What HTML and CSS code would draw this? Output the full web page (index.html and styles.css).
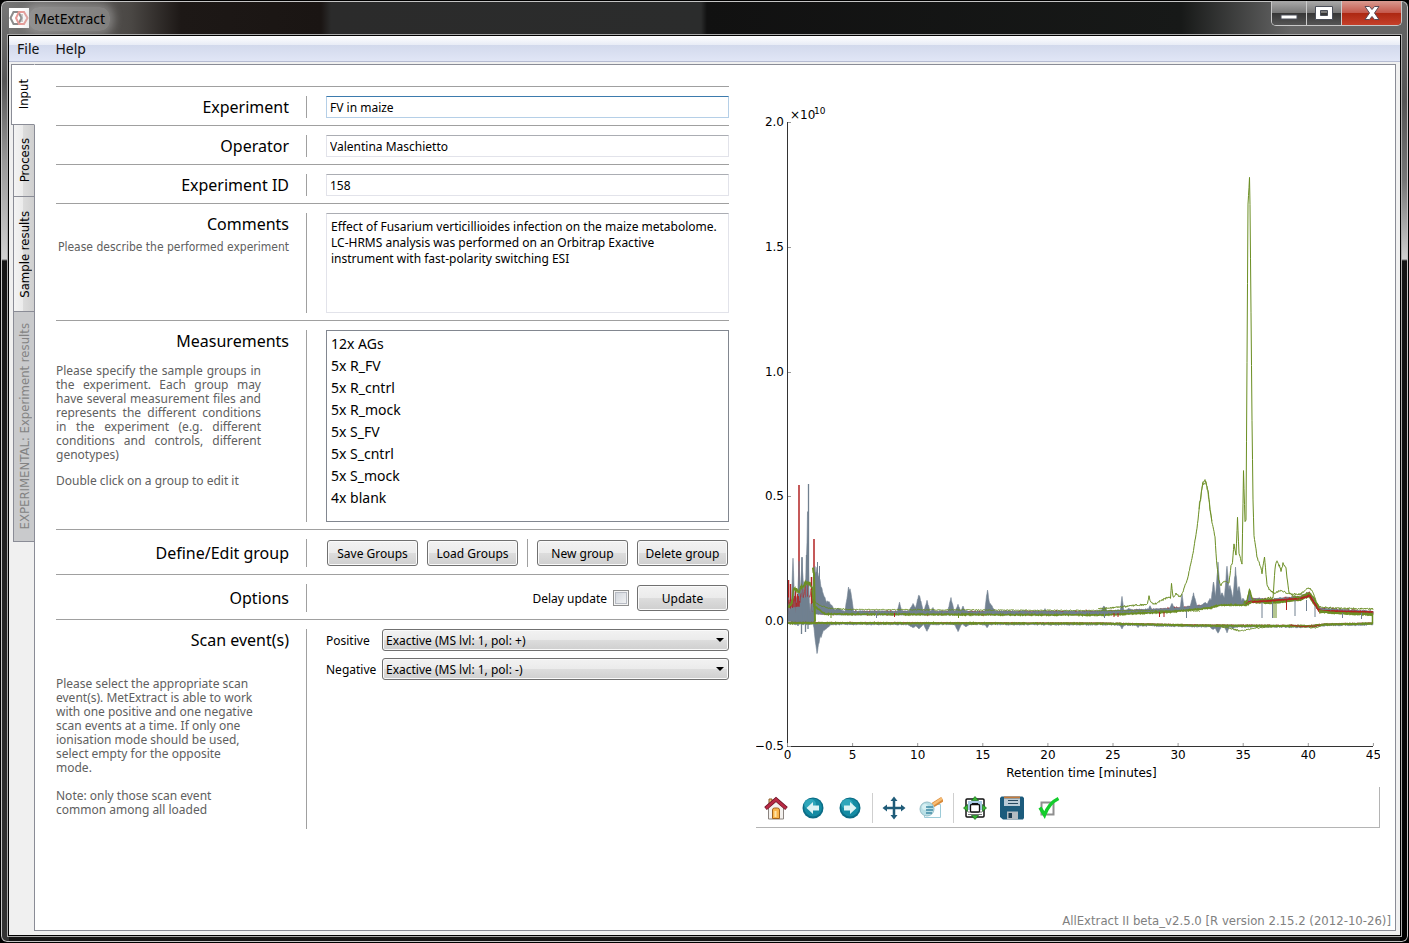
FILE: index.html
```html
<!DOCTYPE html>
<html lang="en">
<head>
  <meta charset="UTF-8" />
  <meta name="viewport" content="width=device-width, initial-scale=1.0"/>
  <title>MetExtract</title>
  <link rel="stylesheet" href="styles.css">
</head>
<body>
  <div class="window">
    <header class="titlebar">
      <svg class="app-icon" viewBox="0 0 20 20" width="20" height="20" aria-hidden="true">
        <rect width="20" height="20" fill="#fff"/>
        <g fill="none" stroke-width="2">
          <path d="M4.500 4h5l3 6-3 6h-5L1.500 10z" stroke="#8c8c8c"/>
          <path d="M10 4h5l3.500 6-3.500 6h-5L7 10z" stroke="#e79a96"/>
          <path d="M13 6v8" stroke="#9a9a9a" stroke-width="1"/>
        </g>
      </svg>
      <span class="app-title">MetExtract</span>
      <div class="window-buttons">
        <button class="win-btn" aria-label="Minimize">
          <svg viewBox="0 0 18 14" width="18" height="14"><rect x="1" y="9" width="16" height="4" fill="#fff" stroke="#4b4f5a"/></svg>
        </button>
        <button class="win-btn" aria-label="Maximize">
          <svg viewBox="0 0 18 14" width="18" height="14"><path fill-rule="evenodd" d="M.5.5h17v13H.5zM5.500 4.500v5h7v-5z" fill="#fff" stroke="#4b4f5a"/></svg>
        </button>
        <button class="win-btn win-close" aria-label="Close">
          <svg viewBox="0 0 18 14" width="18" height="14"><path d="M2 .5h4.500L9 3.500 11.500.5H16L11.500 7l4.500 6.500h-4.500L9 10.500l-2.500 3H2L6.500 7z" fill="#fff" stroke="#5b4a55"/></svg>
        </button>
      </div>
    </header>

    <div class="client">
      <nav class="menubar">
        <a href="#">File</a>
        <a href="#">Help</a>
      </nav>

      <div class="workspace">
        <div class="tabs" role="tablist">
          <button class="tab tab-active" role="tab"><span>Input</span></button>
          <button class="tab tab-process" role="tab"><span>Process</span></button>
          <button class="tab tab-sample" role="tab"><span>Sample results</span></button>
          <button class="tab tab-experiment" role="tab" disabled><span>EXPERIMENTAL: Experiment results</span></button>
        </div>

        <main class="panel">
          <div class="columns">
            <form class="form">
              <div class="row">
                <div class="row-label"><label for="experiment">Experiment</label></div>
                <div class="row-field"><input class="text focused" type="text" id="experiment" value="FV in maize" /></div>
              </div>
              <div class="row">
                <div class="row-label"><label for="operator">Operator</label></div>
                <div class="row-field"><input class="text" type="text" id="operator" value="Valentina Maschietto" /></div>
              </div>
              <div class="row">
                <div class="row-label"><label for="expid">Experiment ID</label></div>
                <div class="row-field"><input class="text" type="text" id="expid" value="158" /></div>
              </div>
              <div class="row">
                <div class="row-label">
                  <label for="comments">Comments</label>
                  <p class="hint hint-right">Please describe the performed experiment</p>
                </div>
                <div class="row-field"><textarea id="comments">Effect of Fusarium verticillioides infection on the maize metabolome.
LC-HRMS analysis was performed on an Orbitrap Exactive
instrument with fast-polarity switching ESI</textarea></div>
              </div>
              <div class="row">
                <div class="row-label">
                  <label for="groups">Measurements</label>
                  <div class="hint hint-block hint-justify">
                    <p>Please specify the sample groups in the experiment. Each group may have several measurement files and represents the different conditions in the experiment (e.g. different conditions and controls, different genotypes)</p>
                    <p>Double click on a group to edit it</p>
                  </div>
                </div>
                <div class="row-field">
                  <select id="groups" class="groups" size="8">
                    <option>12x AGs</option>
                    <option>5x R_FV</option>
                    <option>5x R_cntrl</option>
                    <option>5x R_mock</option>
                    <option>5x S_FV</option>
                    <option>5x S_cntrl</option>
                    <option>5x S_mock</option>
                    <option>4x blank</option>
                  </select>
                </div>
              </div>
              <div class="row row-buttons">
                <div class="row-label"><span>Define/Edit group</span></div>
                <div class="row-field buttons">
                  <button type="button" class="btn">Save Groups</button>
                  <button type="button" class="btn">Load Groups</button>
                  <span class="divider"></span>
                  <button type="button" class="btn">New group</button>
                  <button type="button" class="btn">Delete group</button>
                </div>
              </div>
              <div class="row row-buttons">
                <div class="row-label"><span>Options</span></div>
                <div class="row-field buttons options">
                  <label class="check-label" for="delay">Delay update</label>
                  <input type="checkbox" class="check" id="delay" />
                  <button type="button" class="btn">Update</button>
                </div>
              </div>
              <div class="row row-scan">
                <div class="row-label">
                  <span>Scan event(s)</span>
                  <div class="hint hint-block hint-scan">
                    <p>Please select the appropriate scan event(s). MetExtract is able to work with one positive and one negative scan events at a time. If only one ionisation mode should be used, select empty for the opposite mode.</p>
                    <p>Note: only those scan event common among all loaded</p>
                  </div>
                </div>
                <div class="row-field scans">
                  <label for="positive">Positive</label>
                  <div class="combo"><select id="positive"><option>Exactive (MS lvl: 1, pol: +)</option></select></div>
                  <label for="negative">Negative</label>
                  <div class="combo"><select id="negative"><option>Exactive (MS lvl: 1, pol: -)</option></select></div>
                </div>
              </div>
            </form>

            <section class="plot">
              <svg id="chart" class="chart" viewBox="756 86 624 701" role="img" aria-label="Chromatograms"></svg>
              <div class="toolbar">
                <button class="tool" aria-label="Home">
                  <svg viewBox="0 0 24 24" width="24" height="24">
                    <path d="M5 3h3v7H5z" fill="#f3c27a" stroke="#8a5a2a"/>
                    <path d="M4.500 11 12 5l7.500 6v12h-15z" fill="#f4f1ee" stroke="#8b8480"/>
                    <path d="M8.500 22.500V14q0-2 2-2h3q2 0 2 2v8.500z" fill="#f9b54c" stroke="#a0621c"/>
                    <path d="M10.500 21v-6h2v6z" fill="#fde3a8"/>
                    <path d="M1.500 12.500 12 3.500l10.500 9" fill="none" stroke="#6d1426" stroke-width="4"/>
                    <path d="M2 12.200 12 3.500l10 8.700" fill="none" stroke="#b92a45" stroke-width="2.500"/>
                  </svg>
                </button>
                <button class="tool" aria-label="Back">
                  <svg viewBox="0 0 24 24" width="24" height="24">
                    <circle cx="12" cy="12" r="10.500" fill="#0b6c86"/><circle cx="12" cy="11.500" r="9" fill="#148ba3"/>
                    <ellipse cx="9" cy="8" rx="6" ry="5" fill="#3ab3c4" opacity=".7"/>
                    <path d="M5.500 12 12 6v3.500h6v5h-6V18z" fill="#dcf3f4"/>
                  </svg>
                </button>
                <button class="tool" aria-label="Forward">
                  <svg viewBox="0 0 24 24" width="24" height="24">
                    <circle cx="12" cy="12" r="10.500" fill="#0b6c86"/><circle cx="12" cy="11.500" r="9" fill="#148ba3"/>
                    <ellipse cx="9" cy="8" rx="6" ry="5" fill="#3ab3c4" opacity=".7"/>
                    <path d="M18.500 12 12 6v3.500H6v5h6V18z" fill="#dcf3f4"/>
                  </svg>
                </button>
                <span class="tool-sep"></span>
                <button class="tool" aria-label="Pan">
                  <svg viewBox="0 0 24 24" width="24" height="24">
                    <path d="M12 3v18M3 12h18" stroke="#1f5b78" stroke-width="2.500"/>
                    <path d="M12 .5 15.500 5h-7zM12 23.500 15.500 19h-7zM.5 12 5 8.500v7zM23.500 12 19 8.500v7z" fill="#1f5b78"/>
                  </svg>
                </button>
                <button class="tool" aria-label="Zoom">
                  <svg viewBox="0 0 24 24" width="24" height="24">
                    <path d="M5.500 8.500h16v13h-16z" fill="#fbfeff" stroke="#9ccbd8"/>
                    <path d="M14 9 23.500 3" stroke="#d98a3a" stroke-width="5"/>
                    <path d="M14 8.500 23 2.500" stroke="#f7bd74" stroke-width="2.500"/>
                    <circle cx="8" cy="13" r="7" fill="#b9dfe5" stroke="#94bcc6"/>
                    <circle cx="6" cy="11" r="3" fill="#d8f0f3"/>
                    <path d="M7 11h7M7 14h7M7 17h6" stroke="#3f8ba5" stroke-width="1.500"/>
                  </svg>
                </button>
                <span class="tool-sep"></span>
                <button class="tool" aria-label="Configure subplots">
                  <svg viewBox="0 0 24 24" width="24" height="24">
                    <rect x="3" y="3" width="18" height="18" rx="1" fill="#fff" stroke="#111" stroke-width="1.500"/>
                    <rect x="5" y="5" width="14" height="9" fill="#a9cbe6"/>
                    <path d="M5 16h14M5 18.500h14" stroke="#777"/>
                    <rect x="7.500" y="8.500" width="9" height="7.500" rx="1" fill="#fff" stroke="#111" stroke-width="1.300"/>
                    <path d="M9 8h6" stroke="#111" stroke-width="2"/>
                    <path d="m12 .5 3.500 4h-7zM12 23.500l3.500-4h-7zM.5 12l4-3.500v7zM23.500 12l-4-3.500v7z" fill="#35b52e" stroke="#14631a" stroke-width=".7"/>
                  </svg>
                </button>
                <button class="tool" aria-label="Save">
                  <svg viewBox="0 0 24 24" width="24" height="24">
                    <path d="M1.500.5h21l1.500 1.500v20l-1 1.500H3L0 21V2z" fill="#1c5b7c"/>
                    <path d="M4 .5h16v2H4z" fill="#c47a3c"/>
                    <path d="M4 2.500h16V10H4z" fill="#b9cad6"/>
                    <path d="M8 4.500h10M8 7.500h10" stroke="#24475e" stroke-width="1.200"/>
                    <path d="M7 15.500h11v8H7z" fill="#b4bcc2"/><path d="M8.500 17h3.500v5H8.500z" fill="#1c3c52"/>
                  </svg>
                </button>
                <button class="tool" aria-label="Edit parameters">
                  <svg viewBox="0 0 24 24" width="24" height="24">
                    <path d="M4.500 6.500h12v12h-12z" fill="#fff" stroke="#8f8f8f" stroke-width="2"/>
                    <path d="M3 11.500 7.500 19Q12 7 21.500 2.500" fill="none" stroke="#14cc2c" stroke-width="3.500"/>
                  </svg>
                </button>
              </div>
            </section>
          </div>
          <footer class="version">AllExtract II beta_v2.5.0 [R version 2.15.2 (2012-10-26)]</footer>
        </main>
      </div>
    </div>
  </div>
  <script src="chart.js"></script>
</body>
</html>
```

FILE: styles.css
```css
* { box-sizing: border-box; }

body {
  margin: 0;
  height: 100vh;
  background: #000;
  font-family: "Noto Sans", sans-serif;
  font-size: 12px;
  color: #000;
}

button, input, select, textarea { font: inherit; color: inherit; }
p { margin: 0; }

/* window frame */
.window {
  display: flex;
  flex-direction: column;
  height: 100vh;
  padding: 0 6px 6px;
  border: 1px solid #000;
  border-radius: 7px;
  box-shadow: inset 0 0 0 1px #c4c4c4;
  background:
    linear-gradient(#777 0, #555 80px, #999 160px, #d0d0d0 258px, #151515 260px, #333 100%) left / 8px 100% no-repeat,
    linear-gradient(#666 0, #555 100px, #777 180px, #d0d0d0 258px, #151515 260px, #000 100%) right / 8px 100% no-repeat,
    linear-gradient(to right, #777 0, #4a4744 130px, #1d1816 180px, #1a1513 320px, #2b2b2b 330px, #2b2c2c 700px, #111 706px, #171918 1180px, #666 1290px) top / 100% 35px no-repeat,
    #151515;
}

.titlebar {
  display: flex;
  align-items: flex-start;
  height: 34px;
}

.app-icon { margin: 7px 0 0 2px; }

.app-title {
  margin: 6px 0 0;
  padding: 0 5px;
  font-size: 14px;
  line-height: 24px;
  background: rgba(200, 200, 200, .4);
  border-radius: 10px;
  box-shadow: 0 0 8px 4px rgba(200, 200, 200, .4);
}

.window-buttons {
  display: flex;
  margin-left: auto;
  border: 1px solid #c8c8c8;
  border-top: 0;
  border-radius: 0 0 5px 5px;
  overflow: hidden;
}

.win-btn {
  display: grid;
  place-items: center;
  width: 35px;
  height: 24px;
  padding: 0;
  border: 0;
  border-right: 1px solid #ccc;
  background: linear-gradient(#aaa, #777 50%, #353535 50%, #555);
}

.win-close {
  width: 59px;
  border-right: 0;
  background: linear-gradient(#d99a90, #c4574a 50%, #ac2711 50%, #c5402a);
}

.client {
  flex: 1;
  display: flex;
  flex-direction: column;
  min-height: 0;
  border: 1px solid #000;
  outline: 1px solid #aaa;
  margin: 0 1px;
  background: #f0f0f0;
}

.menubar {
  display: flex;
  gap: 16px;
  height: 26px;
  padding: 0 8px;
  border-bottom: 1px solid #b6bcd2;
  background: linear-gradient(#fff, #e8ecf6 9px, #d2d9ec 9px, #e1e6f6);
}

.menubar a {
  font-size: 14px;
  line-height: 26px;
  color: #111;
  text-decoration: none;
}

.workspace {
  flex: 1;
  display: flex;
  min-height: 0;
  padding: 2px 4px 4px 2px;
}

/* side tabs */
.tabs {
  display: flex;
  flex-direction: column;
  align-items: flex-end;
  width: 24px;
  margin-right: -1px;
  z-index: 1;
}

.tab {
  display: flex;
  align-items: center;
  justify-content: center;
  width: 22px;
  padding: 0;
  border: 1px solid #8a8c96;
  border-top-width: 0;
  background: linear-gradient(to right, #f3f3f3, #ebebeb 45%, #dcdcdc 45%, #cfcfcf);
  font-family: "DejaVu Sans Condensed", "DejaVu Sans", sans-serif;
  font-size: 13px;
}

.tab span {
  writing-mode: vertical-rl;
  transform: rotate(180deg);
  white-space: nowrap;
}

.tab-active {
  width: 24px;
  height: 61px;
  border-top-width: 1px;
  border-right-color: #fff;
  background: #fff;
}

.tab-process { height: 72px; }
.tab-sample { height: 115px; }

.tab-experiment {
  height: 230px;
  background: #c9cacc;
  color: #838383;
}

.panel {
  flex: 1;
  display: flex;
  flex-direction: column;
  min-width: 0;
  padding: 21px 15px 0 21px;
  border: 1px solid #8a8c96;
  background: #fff;
}

.columns {
  display: grid;
  grid-template-columns: 673fr 624fr;
  gap: 27px;
  align-items: start;
}

/* form rows */
.row {
  display: flex;
  padding: 9px 0 7px;
  border-top: 1px solid #a0a0a0;
}

.row-label {
  flex: none;
  width: 251px;
  padding-right: 17px;
  border-right: 1px solid #a0a0a0;
  font-size: 16px;
  line-height: 22px;
  text-align: right;
}

.row-field {
  flex: 1;
  min-width: 0;
  padding-left: 19px;
}

.row-buttons .row-label { line-height: 28px; }
.row-scan .row-label { min-height: 200px; }

.hint {
  font-size: 12px;
  line-height: 14px;
  color: #606060;
}

.hint-right {
  padding-top: 5px;
  font-family: "DejaVu Sans Condensed", "DejaVu Sans", sans-serif;
  white-space: nowrap;
}

.hint-block {
  width: 201px;
  padding-top: 12px;
  text-align: left;
}

.hint-block p + p { margin-top: 12px; }

.hint-justify {
  width: 205px;
  text-align: justify;
}

.hint-scan { padding-top: 26px; }
.hint-scan p + p { margin-top: 14px; }

.text, textarea {
  display: block;
  width: 100%;
  border: 1px solid #e2e3ea;
  border-top-color: #abadb3;
  background: #fff;
  outline: none;
}

.text {
  height: 22px;
  padding: 0 3px;
}

.focused {
  border-color: #b5cfe7;
  border-top-color: #3d7bad;
}

textarea {
  height: 100px;
  padding: 5px 4px;
  line-height: 16px;
  resize: none;
  overflow: hidden;
}

.groups {
  display: block;
  width: 100%;
  height: 192px;
  padding: 3px 0;
  border: 1px solid #828790;
  border-radius: 0;
  background: #fff;
  font-size: 14px;
  overflow: hidden;
  outline: none;
}

.groups option {
  height: 22px;
  min-height: 22px;
  padding: 0 4px;
  line-height: 22px;
}

.buttons {
  display: flex;
  align-items: center;
  justify-content: space-between;
  height: 28px;
  padding: 0 1px 0 20px;
}

.btn {
  width: 91px;
  height: 26px;
  padding: 0;
  border: 1px solid #707070;
  border-radius: 3px;
  box-shadow: inset 0 0 0 1px #fafafa;
  background: linear-gradient(#f2f2f2, #ebebeb 50%, #dddddd 50%, #cfcfcf);
  white-space: nowrap;
}

.divider {
  width: 1px;
  height: 28px;
  background: #a0a0a0;
}

.options { justify-content: flex-end; }

.check {
  appearance: none;
  width: 16px;
  height: 16px;
  margin: 0 8px 0 6px;
  border: 1px solid #8e8f8f;
  box-shadow: inset 0 0 0 1px #f4f4f4, inset 0 0 0 2px #b8bcc4;
  background: linear-gradient(135deg, #cdd2da, #f6f6f6);
}

.scans {
  display: grid;
  grid-template-columns: 49px 1fr;
  gap: 7px;
  align-items: center;
  align-content: start;
}

.combo { position: relative; }

.combo select {
  appearance: none;
  display: block;
  width: 100%;
  height: 22px;
  padding: 0 3px;
  border: 1px solid #707070;
  border-radius: 3px;
  box-shadow: inset 0 0 0 1px #fafafa;
  background: linear-gradient(#f2f2f2, #ebebeb 50%, #dddddd 50%, #cfcfcf);
}

.combo::after {
  content: "";
  position: absolute;
  top: 9px;
  right: 5px;
  border: 4px solid transparent;
  border-top-color: #000;
  border-bottom: 0;
}

/* plot */
.chart {
  display: block;
  width: 100%;
  height: auto;
  font-family: "DejaVu Sans", sans-serif;
  font-size: 12px;
}

.toolbar {
  display: flex;
  align-items: center;
  gap: 13px;
  height: 41px;
  padding: 2px 0 0 8px;
  border: solid #b4b4b4;
  border-width: 0 1px 1px 0;
}

.tool {
  padding: 0;
  border: 0;
  background: none;
}

.tool svg { display: block; }

.tool-sep {
  width: 1px;
  height: 30px;
  margin: 0 -4px 0 -3px;
  background: #cfcfcf;
}

.version {
  margin: auto -11px 1px 0;
  font-family: "DejaVu Sans Condensed", "DejaVu Sans", sans-serif;
  font-size: 13px;
  line-height: 16px;
  text-align: right;
  color: #808080;
}
```

FILE: chart.js
```js
const GREEN = "#6b8e23", GRAY = "#708090", RED = "#b22222";
const NS = "http://www.w3.org/2000/svg";
const chart = document.getElementById("chart");

// fixed seed, so the traces look the same on every load
let seed = 7;
function rand() {
  seed = (seed * 16807) % 2147483647;
  return seed / 2147483647;
}

function add(name, attrs, text) {
  const el = document.createElementNS(NS, name);
  for (const key in attrs) el.setAttribute(key, attrs[key]);
  if (text) el.textContent = text;
  chart.appendChild(el);
  return el;
}

function at(points, x) {
  for (let i = 1; i < points.length; i++) {
    const [x0, y0] = points[i - 1], [x1, y1] = points[i];
    if (x <= x1) return y0 + (y1 - y0) * (x - x0) / (x1 - x0);
  }
  return points[points.length - 1][1];
}

function trace(points, color, noise, width) {
  let d = "";
  const end = points[points.length - 1][0];
  for (let x = points[0][0]; x <= end; x += 0.5) {
    d += `${d ? "L" : "M"}${x} ${(at(points, x) + (rand() - 0.5) * noise).toFixed(1)}`;
  }
  add("path", { d, fill: "none", stroke: color, "stroke-width": width || 1 });
}

// filled band round a baseline, with peaks [x, y, half width]
function band(base, peaks, thick, noise, dir) {
  let d = "";
  const back = [];
  for (let x = base[0][0]; x <= base[base.length - 1][0]; x += 0.5) {
    const y = at(base, x);
    let top = y + dir * (thick + rand() * noise);
    for (const [px, py, w] of peaks) {
      const k = 1 - Math.abs(x - px) / w;
      if (k > 0) {
        const v = y + (py - y) * Math.pow(k, 0.9) * (0.88 + rand() * 0.12);
        top = dir < 0 ? Math.min(top, v) : Math.max(top, v);
      }
    }
    d += `${d ? "L" : "M"}${x} ${top.toFixed(1)}`;
    back.unshift(`L${x} ${y.toFixed(1)}`);
  }
  add("path", { d: d + back.join("") + "z", fill: GRAY, stroke: GRAY, "stroke-width": 0.6 });
}

function spikes(list, color, width) {
  for (const [x, y0, y1] of list) {
    add("path", { d: `M${x} ${y0}V${y1}`, stroke: color, "stroke-width": width || 1 });
  }
}

function axes() {
  add("path", { d: "M787.5 122V746.5H1373", fill: "none", stroke: "#333" });
  [["2.0", 122], ["1.5", 247], ["1.0", 372], ["0.5", 496], ["0.0", 621], ["−0.5", 746]].forEach(([label, y]) => {
    add("path", { d: `M788 ${y + 0.5}h3`, stroke: "#999" });
    add("text", { x: 784, y: y + 4, "text-anchor": "end" }, label);
  });
  for (let m = 0; m <= 45; m += 5) {
    const x = 787.5 + m * 13.02;
    add("path", { d: `M${x} 746v-3`, stroke: "#999" });
    add("text", { x, y: 759, "text-anchor": "middle" }, String(m));
  }
  add("text", { x: 1081.5, y: 777, "text-anchor": "middle" }, "Retention time [minutes]");
  add("text", { x: 790, y: 119 }, "×10");
  add("text", { x: 814, y: 114, "font-size": 9 }, "10");
}

const base = [[813, 614], [840, 615], [1100, 615], [1170, 612], [1210, 608], [1220, 605], [1246, 605], [1252, 602], [1270, 603], [1300, 600], [1309, 596], [1314, 604], [1320, 612], [1373, 615]];
const shift = (points, dy) => points.map(([x, y]) => [x, y + dy]);

// injection noise at the start of the run
spikes([[788.5, 580, 622], [790.5, 584, 620], [795.5, 590, 622], [811.5, 577, 612], [797.5, 596, 622]], RED, 1.5);
spikes([[799, 485, 622], [814, 539, 622]], RED, 1.5);
band([[788, 622], [814, 622]], [[793, 553, 2], [799, 556, 2], [802, 557, 3], [804, 578, 2], [806.5, 555, 2], [807.5, 510, 2], [814, 560, 2]], 6, 20, -1);
trace([[788, 608], [793, 602], [800, 600], [804, 592], [811, 590], [813, 600]], RED, 14, .7);
spikes([[808.5, 484, 620], [802, 557, 620], [806.5, 555, 620]], GRAY, 1.3);
spikes([[798, 615, 626], [801.5, 615, 634], [805.5, 615, 632], [808, 615, 629]], GRAY, 1.3);
trace([[788, 607], [792, 603], [794, 586], [798, 592], [802, 587], [807, 583], [812, 585], [813.5, 592]], GREEN, 5, 1.5);

trace(shift(base, -2), RED, 1, 3);
band(base, [
  [815, 562, 3], [817, 566, 7], [819, 575, 8], [822, 588, 8], [828, 600, 10], [838, 608, 12], [848.5, 587, 4], [850, 586, 4],
  [899.5, 602, 3], [913, 603, 6], [919, 593, 5], [927, 600, 4], [933, 607, 3], [951, 597, 4], [958, 604, 4], [963, 606, 4],
  [987.5, 587, 3], [990, 602, 7], [1045, 608, 3], [1104, 605, 5], [1122, 595, 2], [1129, 608, 8], [1150, 605, 3], [1172, 603, 4],
  [1182, 592, 2], [1193.5, 592, 4], [1205, 602, 7], [1210, 598, 5], [1213.5, 580, 3], [1218, 561, 3], [1222, 592, 5],
  [1227, 563, 3], [1230, 584, 4], [1235.5, 566, 3], [1239, 584, 3], [1243, 598, 4], [1249.5, 589, 3]
], 3, 1.5, -1);
spikes([[817.5, 562, 575], [819.5, 566, 580]], GRAY);
trace(shift(base, -1).filter(p => p[0] > 1240), RED, 1, 2);
trace([[812, 590], [814, 606], [825, 614], [1100, 615]].concat(base.slice(3)), GREEN, 1.2, 1.5);
trace([[1244, 603], [1247, 601], [1249.5, 590], [1253, 601], [1265, 600], [1285, 601], [1301, 597], [1309, 593], [1314, 598], [1319, 608]], GREEN, 1.5, 1.5);
trace([[1252, 602], [1300, 598.5], [1310, 596], [1319, 611], [1373, 612]], RED, .6, 1.5);
trace([[1319, 611], [1335, 613], [1373, 614]], GREEN, .6, 2);
spikes([[1262, 602, 618], [1272.5, 602, 618], [1295, 600, 616], [1306.5, 600, 611], [1315, 606, 617], [1342.5, 613, 618], [1361.5, 613, 619], [1186.5, 610, 618], [1104.5, 613, 618], [876.5, 613, 618]], GRAY);
spikes([[1114, 613, 617], [1118, 613, 617], [1159.5, 612, 617], [1164, 612, 617], [1286.5, 600, 610], [894.5, 613, 617]], RED);
spikes([[1274, 602, 618], [1276, 602, 618], [958.5, 613, 618], [831, 613, 618]], GREEN);

// negative mode
const neg = [[788, 622.5], [1100, 623], [1200, 625], [1310, 625.5], [1325, 624], [1373, 623]];
band(neg, [[815.5, 643, 2], [817, 657, 3], [818, 648, 5], [821, 638, 5], [824, 631, 9], [913, 628, 8], [919, 629, 6], [927, 632, 4], [958, 632, 4], [966, 627, 5],
  [987, 628, 3], [1122, 629, 3], [1138, 628, 2], [1213, 630, 5], [1218, 634, 4], [1227, 633, 3], [1233, 629, 5]], 1, 1.5, 1);
trace(neg, RED, .8, 1);
trace(shift(neg, .5), GREEN, .8, 1.8);
trace([[1215, 626], [1230, 628], [1240, 631], [1250, 629], [1265, 627], [1290, 626], [1308, 627], [1316, 628], [1325, 624]], GREEN, 1.5);
trace([[1290, 625], [1302, 626.5], [1317, 626], [1320, 624.5]], RED, 1);
trace([[813, 568], [814, 574], [815, 622]], GREEN, 3, 2);
add("path", { d: "M1372.5 614V623", stroke: GREEN, "stroke-width": 1.5 });

trace([[813, 600], [819, 605], [830, 608.5], [850, 609.5], [1100, 610.5], [1200, 611]], GREEN, 1);
trace([[1098, 609], [1120, 607], [1145, 604.5], [1147.5, 603], [1149, 596], [1151, 603], [1155, 604], [1168, 597], [1170.5, 597.5], [1171.5, 584],
  [1173, 597], [1176, 594], [1180, 597], [1183, 592], [1188, 577], [1193, 553], [1197, 528], [1200, 502], [1203, 482], [1205, 480], [1208, 490],
  [1210, 510], [1212, 522], [1215, 537], [1216.5, 560], [1218.5, 580], [1221, 585], [1225, 581], [1229, 583], [1231, 566], [1232.5, 563], [1234, 543], [1236, 556],
  [1237.5, 518], [1239, 553], [1242, 565], [1243.5, 471], [1245, 521], [1246, 520], [1248, 205], [1249.5, 178], [1250, 205], [1252, 420], [1253, 500],
  [1254, 535], [1257, 557], [1260, 565], [1262, 573], [1264.5, 557], [1267, 585], [1270, 591], [1275, 593], [1281, 590], [1286, 593], [1300, 594.5],
  [1308, 588], [1312, 590], [1317, 604], [1320, 607], [1340, 608.5], [1373, 609]], GREEN, 2);
trace([[1199, 508], [1203, 483], [1205, 482], [1208, 490], [1210, 510], [1212, 522]], GREEN, 7, .7);
trace([[1267, 598], [1273, 598], [1275, 568], [1277, 560], [1281, 570], [1283, 564], [1286, 568], [1288, 586], [1289, 594], [1300, 598]], GREEN, 3);

axes();
```
